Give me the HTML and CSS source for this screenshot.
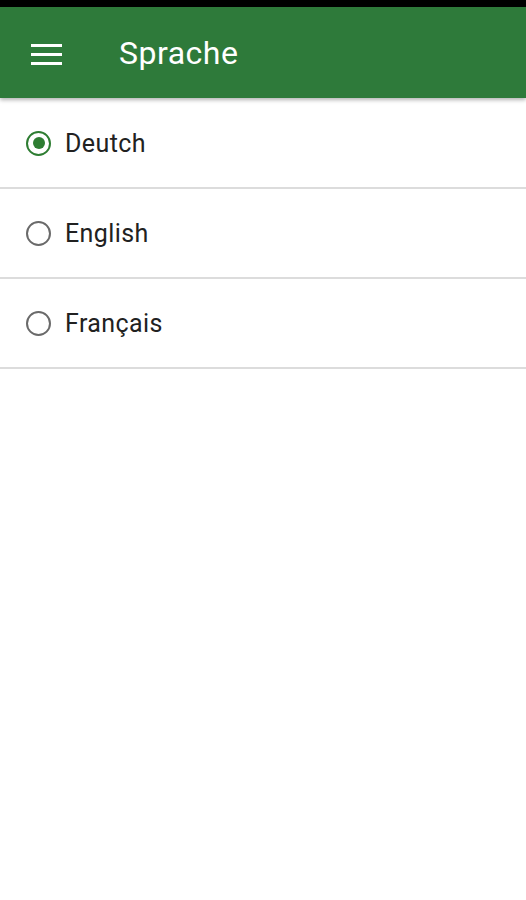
FILE: index.html
```html
<!DOCTYPE html>
<html>
<head>
<meta charset="utf-8">
<link rel="stylesheet" href="styles.css">
</head>
<body>
<div class="status"></div>
<header class="appbar">
  <svg class="menu" width="32" height="24" viewBox="0 0 32 24">
    <rect x="0" y="2" width="31" height="3" fill="#fff"/>
    <rect x="0" y="11" width="31" height="3" fill="#fff"/>
    <rect x="0" y="20" width="31" height="3" fill="#fff"/>
  </svg>
  <h1 class="title">Sprache</h1>
</header>
<ul class="list">
  <li class="item"><span class="radio checked"></span><span class="label">Deutch</span></li>
  <li class="item"><span class="radio"></span><span class="label">English</span></li>
  <li class="item"><span class="radio"></span><span class="label">Français</span></li>
</ul>
</body>
</html>
```
FILE: styles.css
```css
html, body {
  margin: 0;
  padding: 0;
  background: #fff;
  font-family: Roboto, "Liberation Sans", sans-serif;
}
.status {
  height: 7px;
  background: #000;
}
.appbar {
  height: 91px;
  background: #2e7a3a;
  display: flex;
  align-items: center;
  box-shadow: 0 2px 4px rgba(0,0,0,0.3);
  position: relative;
  z-index: 1;
}
.menu {
  margin-left: 31px;
  margin-top: 3px;
}
.title {
  margin: 0 0 0 56px;
  color: #fff;
  font-size: 32px;
  font-weight: 400;
  letter-spacing: 0.5px;
}
.list {
  list-style: none;
  margin: 0;
  padding: 1px 0 0;
}
.item {
  height: 88px;
  border-bottom: 2px solid #dcdcdc;
  display: flex;
  align-items: center;
  padding-left: 26px;
}
.radio {
  box-sizing: border-box;
  width: 25px;
  height: 25px;
  border-radius: 50%;
  border: 2.5px solid #6a6a6a;
  display: flex;
  align-items: center;
  justify-content: center;
}
.radio.checked {
  border-color: #2e7d32;
}
.radio.checked::after {
  content: "";
  width: 12px;
  height: 12px;
  border-radius: 50%;
  background: #2e7d32;
}
.label {
  margin-left: 14px;
  font-size: 25px;
  letter-spacing: 0.4px;
  color: #212121;
}
```
